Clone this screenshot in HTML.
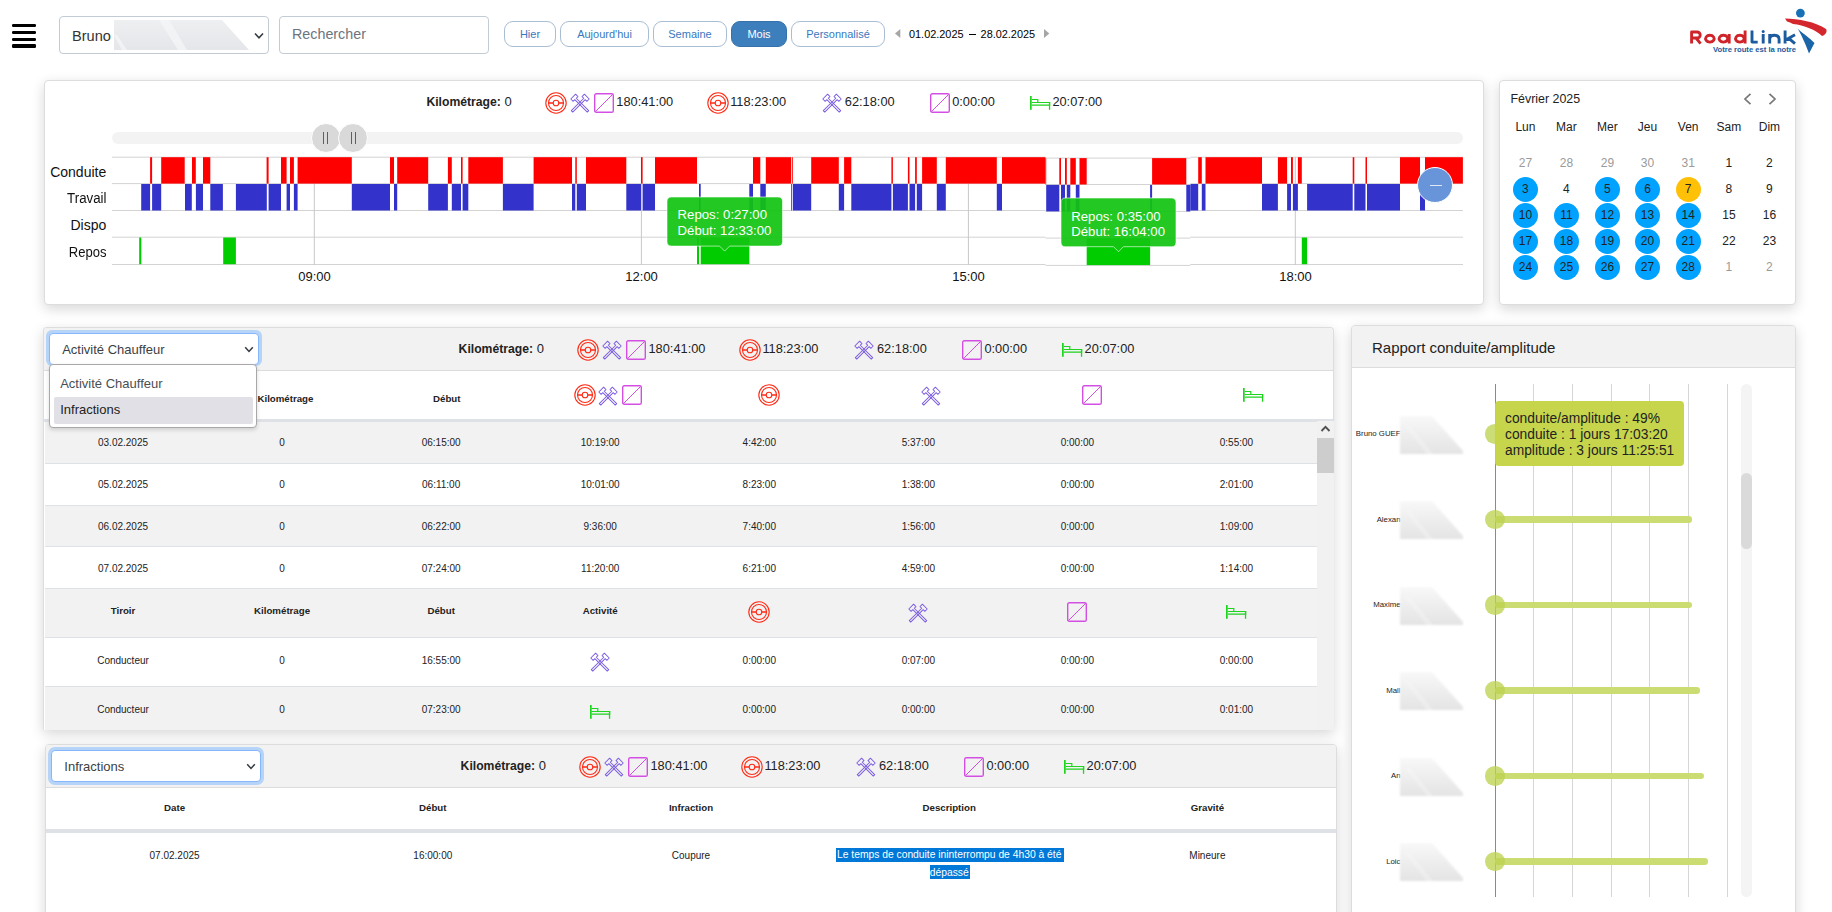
<!DOCTYPE html>
<html><head><meta charset="utf-8">
<style>
*{box-sizing:border-box;margin:0;padding:0}
html,body{width:1832px;height:912px;overflow:hidden;background:#fff;font-family:"Liberation Sans", sans-serif;color:#222}
.a{position:absolute}
.t{position:absolute;white-space:nowrap;line-height:1}
.ic{position:absolute;overflow:visible}
.card{position:absolute;background:#fff;border:1px solid #dddddd;border-radius:4px;box-shadow:0 4px 13px rgba(0,0,0,0.16)}
.btn{position:absolute;top:21px;height:26px;border:1px solid #a9bdd3;border-radius:9px;color:#3a78bd;font-size:11px;line-height:24px;text-align:center;background:#fff}
.cal{position:absolute;width:25px;height:25px;border-radius:50%;font-size:12px;line-height:25px;text-align:center;color:#222}
.td{position:absolute;font-size:10px;line-height:10px;text-align:center;width:160px;white-space:nowrap}
.th{position:absolute;font-size:9.7px;line-height:10px;text-align:center;width:160px;font-weight:bold;white-space:nowrap}
</style></head><body>

<div class="a" style="left:12px;top:24px;width:24px;height:3.4px;background:#000;border-radius:1.2px"></div>
<div class="a" style="left:12px;top:30.9px;width:24px;height:3.2px;background:#000;border-radius:1.2px"></div>
<div class="a" style="left:12px;top:37.6px;width:24px;height:3.3px;background:#000;border-radius:1.2px"></div>
<div class="a" style="left:12px;top:44.2px;width:24px;height:3.4px;background:#000;border-radius:1.2px"></div>
<div class="a" style="left:59px;top:16px;width:210px;height:38px;border:1px solid #c3cbd5;border-radius:4px;background:#fff"></div>
<div class="t" style="left:72px;top:29.1px;font-size:14.6px;color:#333">Bruno</div>
<svg class="ic" style="left:114px;top:20px;filter:blur(0.6px)" width="135" height="30" viewBox="0 0 135 30"><defs><linearGradient id="bg1" x1="0" y1="0" x2="0" y2="1"><stop offset="0" stop-color="#eeeff1"/><stop offset="1" stop-color="#e4e6e9"/></linearGradient></defs><polygon points="0,0 108,0 135,30 0,30" fill="url(#bg1)"/><polygon points="45,0 55,0 73,30 64,30" fill="#f4f5f6" opacity="0.8"/><polygon points="0,15 3,15 13,30 8,30" fill="#f4f5f6" opacity="0.8"/></svg>
<svg class="ic" style="left:254px;top:32px" width="10" height="8" viewBox="0 0 10 8"><path d="M1 1.5L5 5.8L9 1.5" fill="none" stroke="#343a40" stroke-width="1.6"/></svg>
<div class="a" style="left:279px;top:16px;width:210px;height:38px;border:1px solid #c3cbd5;border-radius:4px;background:#fff"></div>
<div class="t" style="left:292px;top:26.8px;font-size:14.3px;color:#6c757d">Rechercher</div>
<div class="btn" style="left:504px;width:52px">Hier</div>
<div class="btn" style="left:560px;width:89px">Aujourd'hui</div>
<div class="btn" style="left:653px;width:74px">Semaine</div>
<div class="btn" style="left:731px;width:56px;background:#3d7ebd;border-color:#3571ab;color:#fff">Mois</div>
<div class="btn" style="left:791px;width:94px">Personnalisé</div>
<svg class="ic" style="left:894.8px;top:28.8px" width="6" height="9" viewBox="0 0 6 9"><path d="M5.3 0V9L0 4.5Z" fill="#a6a6a6"/></svg>
<div class="t" style="left:909px;top:29px;font-size:10.9px;color:#000">01.02.2025</div>
<div class="a" style="left:968.8px;top:34px;width:7px;height:1.1px;background:#000"></div>
<div class="t" style="left:980.6px;top:29px;font-size:10.9px;color:#000">28.02.2025</div>
<svg class="ic" style="left:1044px;top:28.8px" width="6" height="9" viewBox="0 0 6 9"><path d="M0 0V9L5.3 4.5Z" fill="#a6a6a6"/></svg>
<svg class="ic" style="left:1680px;top:0px" width="152" height="60" viewBox="1680 0 152 60">
<path d="M1691.6 43.6V32H1697.2A3 3 0 0 1 1697.2 38H1691.6M1696 38L1700.6 43.6M1709.9 35.3A4.3 3.4 0 1 1 1709.85 35.3ZM1723.4 35.3A4.3 3.4 0 1 0 1723.45 35.3ZM1729.2 34V43.6M1739.8 35.3A4.3 3.4 0 1 0 1739.85 35.3ZM1745.1 30.5V43.6" fill="none" stroke="#d0242b" stroke-width="2.9" stroke-linecap="butt" stroke-linejoin="round"/>
<path d="M1752 30.5V42.1H1757.7M1763.2 34V43.6M1769.7 43.6V34M1769.7 38.6C1770 36 1772 35.2 1774.3 35.2C1777 35.2 1779.1 36.2 1779.1 39.2V43.6M1785.1 30.5V43.6M1785.1 40.2L1795 34.8M1788.8 38.3L1795 43.6" fill="none" stroke="#1b5b9e" stroke-width="2.9" stroke-linecap="butt" stroke-linejoin="round"/>
<circle cx="1763.2" cy="31.6" r="1.5" fill="#1b5b9e"/>
<text x="1713" y="52" font-family="Liberation Sans" font-weight="bold" font-size="7.4" fill="#1b5b9e" textLength="83" lengthAdjust="spacingAndGlyphs">Votre route est la notre</text>
<circle cx="1800.4" cy="13.1" r="4.4" fill="#1870b5"/>
<path d="M1785 18.5 C1798 18.5 1816 22 1826 29 C1827.5 31 1826 35 1822 36 C1816 30 1804 25 1793 24 L1790 22.5 L1787 21.5Z" fill="#d3262d"/>
<path d="M1797.5 28.5 C1802 33 1810 38 1814.5 43 L1809 53.5 C1806 45 1801 34 1797.5 28.5Z" fill="#1a64a8"/>
</svg>
<div class="card" style="left:44px;top:80px;width:1440px;height:225px"></div>
<div class="t" style="left:426.4px;top:95.2px;font-size:13px;line-height:13px"><b style="font-size:12.2px">Kilométrage:</b> 0</div>
<svg class="ic" style="left:544.8px;top:91.9px" width="22" height="22" viewBox="0 0 22 22"><g fill="none" stroke="#ff2a14" stroke-width="1.1"><circle cx="11" cy="11" r="10.2"/><circle cx="11" cy="11" r="7.5"/><circle cx="11" cy="11" r="2.8"/></g><path d="M3.5 11H8.2M13.8 11H18.5" stroke="#ff2a14" stroke-width="1.5"/></svg>
<svg class="ic" style="left:570.2px;top:93.4px" width="20" height="19" viewBox="0 0 20 19"><g fill="none" stroke="#7b5ce0" stroke-width="0.95" stroke-linejoin="round"><path transform="translate(10 10.4) rotate(-45)" d="M-1 11.3L-1 -6.3L-3.4 -6.3L-3.4 -9.6L3.4 -9.6L3.4 -6.3L1 -6.3L1 11.3Z"/><path transform="translate(10 10.4) rotate(45)" d="M-1 11.3L-1 -6.3L-3.4 -6.3L-3.4 -9.6L3.4 -9.6L3.4 -6.3L1 -6.3L1 11.3Z"/></g></svg>
<svg class="ic" style="left:594.1px;top:92.9px" width="20" height="20" viewBox="0 0 20 20"><rect x="0.7" y="0.7" width="18.6" height="18.6" rx="1.6" fill="none" stroke="#d34fe3" stroke-width="1.4"/><path d="M1.3 18.7L18.7 1.3" stroke="#d34fe3" stroke-width="1"/></svg>
<div class="t" style="left:616.3px;top:95.2px;font-size:12.8px;line-height:13px">180:41:00</div>
<svg class="ic" style="left:706.9px;top:91.9px" width="22" height="22" viewBox="0 0 22 22"><g fill="none" stroke="#ff2a14" stroke-width="1.1"><circle cx="11" cy="11" r="10.2"/><circle cx="11" cy="11" r="7.5"/><circle cx="11" cy="11" r="2.8"/></g><path d="M3.5 11H8.2M13.8 11H18.5" stroke="#ff2a14" stroke-width="1.5"/></svg>
<div class="t" style="left:730.2px;top:95.2px;font-size:12.8px;line-height:13px">118:23:00</div>
<svg class="ic" style="left:821.8px;top:93.4px" width="20" height="19" viewBox="0 0 20 19"><g fill="none" stroke="#7b5ce0" stroke-width="0.95" stroke-linejoin="round"><path transform="translate(10 10.4) rotate(-45)" d="M-1 11.3L-1 -6.3L-3.4 -6.3L-3.4 -9.6L3.4 -9.6L3.4 -6.3L1 -6.3L1 11.3Z"/><path transform="translate(10 10.4) rotate(45)" d="M-1 11.3L-1 -6.3L-3.4 -6.3L-3.4 -9.6L3.4 -9.6L3.4 -6.3L1 -6.3L1 11.3Z"/></g></svg>
<div class="t" style="left:844.8px;top:95.2px;font-size:12.8px;line-height:13px">62:18:00</div>
<svg class="ic" style="left:929.9px;top:92.9px" width="20" height="20" viewBox="0 0 20 20"><rect x="0.7" y="0.7" width="18.6" height="18.6" rx="1.6" fill="none" stroke="#d34fe3" stroke-width="1.4"/><path d="M1.3 18.7L18.7 1.3" stroke="#d34fe3" stroke-width="1"/></svg>
<div class="t" style="left:952.2px;top:95.2px;font-size:12.8px;line-height:13px">0:00:00</div>
<svg class="ic" style="left:1029.8px;top:96.0px" width="21" height="14" viewBox="0 0 21 14"><rect x="0" y="0" width="1.7" height="13.8" fill="#1ed41e"/><path d="M1.7 3.5H7.8V6.5M1.7 6.5H19.6V9.2H1.7" fill="none" stroke="#1ed41e" stroke-width="1.2"/><rect x="18.9" y="6" width="1.3" height="7.8" fill="#1ed41e"/></svg>
<div class="t" style="left:1052.4px;top:95.2px;font-size:12.8px;line-height:13px">20:07:00</div>
<div class="a" style="left:112px;top:132px;width:1351px;height:12px;border-radius:6px;background:#f3f3f3"></div>
<div class="a" style="left:310.75px;top:123.19999999999999px;width:30px;height:30px;border-radius:50%;background:#d9d9d9;border:1px solid #fff"></div>
<div class="a" style="left:322.8px;top:132px;width:1.3px;height:12px;background:#5f5f5f"></div>
<div class="a" style="left:327.1px;top:132px;width:1.3px;height:12px;background:#5f5f5f"></div>
<div class="a" style="left:338.3px;top:123.19999999999999px;width:30px;height:30px;border-radius:50%;background:#d9d9d9;border:1px solid #fff"></div>
<div class="a" style="left:350.9px;top:132px;width:1.3px;height:12px;background:#5f5f5f"></div>
<div class="a" style="left:355.2px;top:132px;width:1.3px;height:12px;background:#5f5f5f"></div>
<div class="t" style="right:1725.8px;top:165.0px;font-size:14px;color:#111;transform:scaleX(1.0);transform-origin:100% 50%">Conduite</div>
<div class="t" style="right:1725.8px;top:190.8px;font-size:14px;color:#111;transform:scaleX(0.95);transform-origin:100% 50%">Travail</div>
<div class="t" style="right:1725.8px;top:217.5px;font-size:14px;color:#111;transform:scaleX(1.0);transform-origin:100% 50%">Dispo</div>
<div class="t" style="right:1725.8px;top:244.8px;font-size:14px;color:#111;transform:scaleX(0.93);transform-origin:100% 50%">Repos</div>
<svg class="ic" style="left:112px;top:157px" width="1351" height="110" viewBox="0 0 1351 110"><defs><clipPath id="cA"><rect x="0" y="-2" width="933.5" height="115"/><rect x="1078.3" y="-2" width="400" height="115"/></clipPath><clipPath id="cB"><rect x="933.5" y="-2" width="144.79999999999995" height="115"/></clipPath></defs><g clip-path="url(#cA)"><rect x="0" y="-0.3" width="1351" height="1" fill="#d3d3d3"/><rect x="0" y="26.1" width="1351" height="1" fill="#d3d3d3"/><rect x="0" y="53.0" width="1351" height="1" fill="#d3d3d3"/><rect x="0" y="79.7" width="1351" height="1" fill="#d3d3d3"/><rect x="0" y="107.0" width="1351" height="1" fill="#d3d3d3"/><rect x="201.8" y="0" width="1" height="108" fill="#c8c8c8"/><rect x="528.9" y="0" width="1" height="108" fill="#c8c8c8"/><rect x="855.9" y="0" width="1" height="108" fill="#c8c8c8"/><rect x="1182.8" y="0" width="1" height="108" fill="#c8c8c8"/><rect x="27.2" y="80.5" width="2.1" height="26.7" fill="#00cc00"/>
<rect x="29.2" y="27.0" width="8.9" height="26.5" fill="#3333cc"/>
<rect x="38.1" y="0.2" width="2.0" height="26.4" fill="#ff0000"/>
<rect x="40.1" y="27.0" width="9.1" height="26.5" fill="#3333cc"/>
<rect x="49.2" y="0.2" width="23.5" height="26.4" fill="#ff0000"/>
<rect x="73.0" y="27.0" width="6.8" height="26.5" fill="#3333cc"/>
<rect x="80.0" y="0.2" width="3.8" height="26.4" fill="#ff0000"/>
<rect x="83.9" y="27.0" width="7.1" height="26.5" fill="#3333cc"/>
<rect x="91.0" y="0.2" width="7.3" height="26.4" fill="#ff0000"/>
<rect x="98.3" y="27.0" width="12.6" height="26.5" fill="#3333cc"/>
<rect x="111.2" y="80.5" width="12.7" height="26.7" fill="#00cc00"/>
<rect x="123.9" y="27.0" width="30.9" height="26.5" fill="#3333cc"/>
<rect x="154.6" y="0.2" width="2.0" height="26.4" fill="#ff0000"/>
<rect x="156.6" y="27.0" width="12.4" height="26.5" fill="#3333cc"/>
<rect x="169.0" y="0.2" width="5.6" height="26.4" fill="#ff0000"/>
<rect x="174.6" y="27.0" width="3.4" height="26.5" fill="#3333cc"/>
<rect x="178.0" y="0.2" width="3.9" height="26.4" fill="#ff0000"/>
<rect x="181.9" y="27.0" width="3.7" height="26.5" fill="#3333cc"/>
<rect x="185.6" y="0.2" width="54.2" height="26.4" fill="#ff0000"/>
<rect x="239.8" y="27.0" width="38.2" height="26.5" fill="#3333cc"/>
<rect x="278.0" y="0.2" width="4.0" height="26.4" fill="#ff0000"/>
<rect x="282.0" y="27.0" width="3.2" height="26.5" fill="#3333cc"/>
<rect x="285.2" y="0.2" width="31.0" height="26.4" fill="#ff0000"/>
<rect x="316.2" y="27.0" width="19.7" height="26.5" fill="#3333cc"/>
<rect x="335.9" y="0.2" width="3.9" height="26.4" fill="#ff0000"/>
<rect x="339.8" y="27.0" width="9.2" height="26.5" fill="#3333cc"/>
<rect x="349.0" y="0.2" width="1.6" height="26.4" fill="#ff0000"/>
<rect x="350.6" y="27.0" width="5.7" height="26.5" fill="#3333cc"/>
<rect x="356.3" y="0.2" width="34.6" height="26.4" fill="#ff0000"/>
<rect x="390.9" y="27.0" width="30.7" height="26.5" fill="#3333cc"/>
<rect x="421.6" y="0.2" width="38.4" height="26.4" fill="#ff0000"/>
<rect x="460.0" y="27.0" width="3.3" height="26.5" fill="#3333cc"/>
<rect x="463.3" y="0.2" width="1.5" height="26.4" fill="#ff0000"/>
<rect x="464.8" y="27.0" width="9.2" height="26.5" fill="#3333cc"/>
<rect x="474.0" y="0.2" width="40.3" height="26.4" fill="#ff0000"/>
<rect x="514.3" y="27.0" width="14.7" height="26.5" fill="#3333cc"/>
<rect x="529.0" y="0.2" width="1.6" height="26.4" fill="#ff0000"/>
<rect x="530.6" y="27.0" width="12.4" height="26.5" fill="#3333cc"/>
<rect x="543.0" y="0.2" width="42.0" height="26.4" fill="#ff0000"/>
<rect x="585.0" y="80.5" width="2.0" height="26.7" fill="#00cc00"/>
<rect x="587.0" y="27.0" width="1.7" height="26.5" fill="#3333cc"/>
<rect x="588.7" y="80.5" width="48.6" height="26.7" fill="#00cc00"/>
<rect x="637.3" y="27.0" width="3.7" height="26.5" fill="#3333cc"/>
<rect x="641.0" y="0.2" width="7.3" height="26.4" fill="#ff0000"/>
<rect x="648.3" y="27.0" width="5.5" height="26.5" fill="#3333cc"/>
<rect x="653.8" y="0.2" width="25.4" height="26.4" fill="#ff0000"/>
<rect x="679.2" y="27.0" width="1.0" height="26.5" fill="#3333cc"/>
<rect x="680.2" y="0.2" width="0.8" height="26.4" fill="#ff0000"/>
<rect x="681.0" y="27.0" width="18.2" height="26.5" fill="#3333cc"/>
<rect x="699.2" y="0.2" width="27.6" height="26.4" fill="#ff0000"/>
<rect x="726.8" y="27.0" width="5.3" height="26.5" fill="#3333cc"/>
<rect x="732.1" y="0.2" width="7.2" height="26.4" fill="#ff0000"/>
<rect x="739.3" y="27.0" width="40.1" height="26.5" fill="#3333cc"/>
<rect x="779.4" y="0.2" width="1.5" height="26.4" fill="#ff0000"/>
<rect x="780.9" y="27.0" width="15.0" height="26.5" fill="#3333cc"/>
<rect x="795.9" y="0.2" width="1.6" height="26.4" fill="#ff0000"/>
<rect x="797.5" y="27.0" width="5.6" height="26.5" fill="#3333cc"/>
<rect x="803.1" y="0.2" width="1.7" height="26.4" fill="#ff0000"/>
<rect x="804.8" y="27.0" width="5.3" height="26.5" fill="#3333cc"/>
<rect x="810.1" y="0.2" width="14.7" height="26.4" fill="#ff0000"/>
<rect x="824.8" y="27.0" width="9.0" height="26.5" fill="#3333cc"/>
<rect x="833.8" y="0.2" width="51.0" height="26.4" fill="#ff0000"/>
<rect x="884.8" y="27.0" width="5.2" height="26.5" fill="#3333cc"/>
<rect x="890.0" y="0.2" width="44.2" height="26.4" fill="#ff0000"/>
<rect x="934.2" y="27.0" width="13.1" height="26.5" fill="#3333cc"/>
<rect x="947.3" y="0.2" width="1.7" height="26.4" fill="#ff0000"/>
<rect x="949.0" y="27.0" width="4.0" height="26.5" fill="#3333cc"/>
<rect x="953.0" y="0.2" width="1.8" height="26.4" fill="#ff0000"/>
<rect x="954.8" y="27.0" width="3.5" height="26.5" fill="#3333cc"/>
<rect x="958.3" y="0.2" width="5.5" height="26.4" fill="#ff0000"/>
<rect x="963.8" y="27.0" width="3.7" height="26.5" fill="#3333cc"/>
<rect x="967.5" y="0.2" width="7.2" height="26.4" fill="#ff0000"/>
<rect x="974.7" y="80.5" width="63.4" height="26.7" fill="#00cc00"/>
<rect x="1038.1" y="27.0" width="2.0" height="26.5" fill="#3333cc"/>
<rect x="1040.1" y="0.2" width="34.2" height="26.4" fill="#ff0000"/>
<rect x="1074.3" y="27.0" width="11.9" height="26.5" fill="#3333cc"/>
<rect x="1086.2" y="0.2" width="3.6" height="26.4" fill="#ff0000"/>
<rect x="1089.8" y="27.0" width="3.7" height="26.5" fill="#3333cc"/>
<rect x="1093.5" y="0.2" width="56.5" height="26.4" fill="#ff0000"/>
<rect x="1150.0" y="27.0" width="15.9" height="26.5" fill="#3333cc"/>
<rect x="1165.9" y="0.2" width="9.2" height="26.4" fill="#ff0000"/>
<rect x="1175.1" y="27.0" width="3.9" height="26.5" fill="#3333cc"/>
<rect x="1179.0" y="0.2" width="1.9" height="26.4" fill="#ff0000"/>
<rect x="1180.9" y="27.0" width="5.0" height="26.5" fill="#3333cc"/>
<rect x="1185.9" y="0.2" width="3.9" height="26.4" fill="#ff0000"/>
<rect x="1189.8" y="80.5" width="5.3" height="26.7" fill="#00cc00"/>
<rect x="1195.1" y="27.0" width="45.6" height="26.5" fill="#3333cc"/>
<rect x="1240.7" y="0.2" width="1.6" height="26.4" fill="#ff0000"/>
<rect x="1242.3" y="27.0" width="11.2" height="26.5" fill="#3333cc"/>
<rect x="1253.5" y="0.2" width="1.5" height="26.4" fill="#ff0000"/>
<rect x="1255.0" y="27.0" width="33.0" height="26.5" fill="#3333cc"/>
<rect x="1288.0" y="0.2" width="20.0" height="26.4" fill="#ff0000"/>
<rect x="1308.0" y="27.0" width="5.0" height="26.5" fill="#3333cc"/>
<rect x="1313.0" y="0.2" width="37.9" height="26.4" fill="#ff0000"/>
</g><g clip-path="url(#cB)"><g transform="translate(0 0.9)"><rect x="0" y="-0.3" width="1351" height="1" fill="#d3d3d3"/><rect x="0" y="26.1" width="1351" height="1" fill="#d3d3d3"/><rect x="0" y="53.0" width="1351" height="1" fill="#d3d3d3"/><rect x="0" y="79.7" width="1351" height="1" fill="#d3d3d3"/><rect x="0" y="107.0" width="1351" height="1" fill="#d3d3d3"/><rect x="201.8" y="0" width="1" height="108" fill="#c8c8c8"/><rect x="528.9" y="0" width="1" height="108" fill="#c8c8c8"/><rect x="855.9" y="0" width="1" height="108" fill="#c8c8c8"/><rect x="1182.8" y="0" width="1" height="108" fill="#c8c8c8"/><rect x="27.2" y="80.5" width="2.1" height="26.7" fill="#00cc00"/>
<rect x="29.2" y="27.0" width="8.9" height="26.5" fill="#3333cc"/>
<rect x="38.1" y="0.2" width="2.0" height="26.4" fill="#ff0000"/>
<rect x="40.1" y="27.0" width="9.1" height="26.5" fill="#3333cc"/>
<rect x="49.2" y="0.2" width="23.5" height="26.4" fill="#ff0000"/>
<rect x="73.0" y="27.0" width="6.8" height="26.5" fill="#3333cc"/>
<rect x="80.0" y="0.2" width="3.8" height="26.4" fill="#ff0000"/>
<rect x="83.9" y="27.0" width="7.1" height="26.5" fill="#3333cc"/>
<rect x="91.0" y="0.2" width="7.3" height="26.4" fill="#ff0000"/>
<rect x="98.3" y="27.0" width="12.6" height="26.5" fill="#3333cc"/>
<rect x="111.2" y="80.5" width="12.7" height="26.7" fill="#00cc00"/>
<rect x="123.9" y="27.0" width="30.9" height="26.5" fill="#3333cc"/>
<rect x="154.6" y="0.2" width="2.0" height="26.4" fill="#ff0000"/>
<rect x="156.6" y="27.0" width="12.4" height="26.5" fill="#3333cc"/>
<rect x="169.0" y="0.2" width="5.6" height="26.4" fill="#ff0000"/>
<rect x="174.6" y="27.0" width="3.4" height="26.5" fill="#3333cc"/>
<rect x="178.0" y="0.2" width="3.9" height="26.4" fill="#ff0000"/>
<rect x="181.9" y="27.0" width="3.7" height="26.5" fill="#3333cc"/>
<rect x="185.6" y="0.2" width="54.2" height="26.4" fill="#ff0000"/>
<rect x="239.8" y="27.0" width="38.2" height="26.5" fill="#3333cc"/>
<rect x="278.0" y="0.2" width="4.0" height="26.4" fill="#ff0000"/>
<rect x="282.0" y="27.0" width="3.2" height="26.5" fill="#3333cc"/>
<rect x="285.2" y="0.2" width="31.0" height="26.4" fill="#ff0000"/>
<rect x="316.2" y="27.0" width="19.7" height="26.5" fill="#3333cc"/>
<rect x="335.9" y="0.2" width="3.9" height="26.4" fill="#ff0000"/>
<rect x="339.8" y="27.0" width="9.2" height="26.5" fill="#3333cc"/>
<rect x="349.0" y="0.2" width="1.6" height="26.4" fill="#ff0000"/>
<rect x="350.6" y="27.0" width="5.7" height="26.5" fill="#3333cc"/>
<rect x="356.3" y="0.2" width="34.6" height="26.4" fill="#ff0000"/>
<rect x="390.9" y="27.0" width="30.7" height="26.5" fill="#3333cc"/>
<rect x="421.6" y="0.2" width="38.4" height="26.4" fill="#ff0000"/>
<rect x="460.0" y="27.0" width="3.3" height="26.5" fill="#3333cc"/>
<rect x="463.3" y="0.2" width="1.5" height="26.4" fill="#ff0000"/>
<rect x="464.8" y="27.0" width="9.2" height="26.5" fill="#3333cc"/>
<rect x="474.0" y="0.2" width="40.3" height="26.4" fill="#ff0000"/>
<rect x="514.3" y="27.0" width="14.7" height="26.5" fill="#3333cc"/>
<rect x="529.0" y="0.2" width="1.6" height="26.4" fill="#ff0000"/>
<rect x="530.6" y="27.0" width="12.4" height="26.5" fill="#3333cc"/>
<rect x="543.0" y="0.2" width="42.0" height="26.4" fill="#ff0000"/>
<rect x="585.0" y="80.5" width="2.0" height="26.7" fill="#00cc00"/>
<rect x="587.0" y="27.0" width="1.7" height="26.5" fill="#3333cc"/>
<rect x="588.7" y="80.5" width="48.6" height="26.7" fill="#00cc00"/>
<rect x="637.3" y="27.0" width="3.7" height="26.5" fill="#3333cc"/>
<rect x="641.0" y="0.2" width="7.3" height="26.4" fill="#ff0000"/>
<rect x="648.3" y="27.0" width="5.5" height="26.5" fill="#3333cc"/>
<rect x="653.8" y="0.2" width="25.4" height="26.4" fill="#ff0000"/>
<rect x="679.2" y="27.0" width="1.0" height="26.5" fill="#3333cc"/>
<rect x="680.2" y="0.2" width="0.8" height="26.4" fill="#ff0000"/>
<rect x="681.0" y="27.0" width="18.2" height="26.5" fill="#3333cc"/>
<rect x="699.2" y="0.2" width="27.6" height="26.4" fill="#ff0000"/>
<rect x="726.8" y="27.0" width="5.3" height="26.5" fill="#3333cc"/>
<rect x="732.1" y="0.2" width="7.2" height="26.4" fill="#ff0000"/>
<rect x="739.3" y="27.0" width="40.1" height="26.5" fill="#3333cc"/>
<rect x="779.4" y="0.2" width="1.5" height="26.4" fill="#ff0000"/>
<rect x="780.9" y="27.0" width="15.0" height="26.5" fill="#3333cc"/>
<rect x="795.9" y="0.2" width="1.6" height="26.4" fill="#ff0000"/>
<rect x="797.5" y="27.0" width="5.6" height="26.5" fill="#3333cc"/>
<rect x="803.1" y="0.2" width="1.7" height="26.4" fill="#ff0000"/>
<rect x="804.8" y="27.0" width="5.3" height="26.5" fill="#3333cc"/>
<rect x="810.1" y="0.2" width="14.7" height="26.4" fill="#ff0000"/>
<rect x="824.8" y="27.0" width="9.0" height="26.5" fill="#3333cc"/>
<rect x="833.8" y="0.2" width="51.0" height="26.4" fill="#ff0000"/>
<rect x="884.8" y="27.0" width="5.2" height="26.5" fill="#3333cc"/>
<rect x="890.0" y="0.2" width="44.2" height="26.4" fill="#ff0000"/>
<rect x="934.2" y="27.0" width="13.1" height="26.5" fill="#3333cc"/>
<rect x="947.3" y="0.2" width="1.7" height="26.4" fill="#ff0000"/>
<rect x="949.0" y="27.0" width="4.0" height="26.5" fill="#3333cc"/>
<rect x="953.0" y="0.2" width="1.8" height="26.4" fill="#ff0000"/>
<rect x="954.8" y="27.0" width="3.5" height="26.5" fill="#3333cc"/>
<rect x="958.3" y="0.2" width="5.5" height="26.4" fill="#ff0000"/>
<rect x="963.8" y="27.0" width="3.7" height="26.5" fill="#3333cc"/>
<rect x="967.5" y="0.2" width="7.2" height="26.4" fill="#ff0000"/>
<rect x="974.7" y="80.5" width="63.4" height="26.7" fill="#00cc00"/>
<rect x="1038.1" y="27.0" width="2.0" height="26.5" fill="#3333cc"/>
<rect x="1040.1" y="0.2" width="34.2" height="26.4" fill="#ff0000"/>
<rect x="1074.3" y="27.0" width="11.9" height="26.5" fill="#3333cc"/>
<rect x="1086.2" y="0.2" width="3.6" height="26.4" fill="#ff0000"/>
<rect x="1089.8" y="27.0" width="3.7" height="26.5" fill="#3333cc"/>
<rect x="1093.5" y="0.2" width="56.5" height="26.4" fill="#ff0000"/>
<rect x="1150.0" y="27.0" width="15.9" height="26.5" fill="#3333cc"/>
<rect x="1165.9" y="0.2" width="9.2" height="26.4" fill="#ff0000"/>
<rect x="1175.1" y="27.0" width="3.9" height="26.5" fill="#3333cc"/>
<rect x="1179.0" y="0.2" width="1.9" height="26.4" fill="#ff0000"/>
<rect x="1180.9" y="27.0" width="5.0" height="26.5" fill="#3333cc"/>
<rect x="1185.9" y="0.2" width="3.9" height="26.4" fill="#ff0000"/>
<rect x="1189.8" y="80.5" width="5.3" height="26.7" fill="#00cc00"/>
<rect x="1195.1" y="27.0" width="45.6" height="26.5" fill="#3333cc"/>
<rect x="1240.7" y="0.2" width="1.6" height="26.4" fill="#ff0000"/>
<rect x="1242.3" y="27.0" width="11.2" height="26.5" fill="#3333cc"/>
<rect x="1253.5" y="0.2" width="1.5" height="26.4" fill="#ff0000"/>
<rect x="1255.0" y="27.0" width="33.0" height="26.5" fill="#3333cc"/>
<rect x="1288.0" y="0.2" width="20.0" height="26.4" fill="#ff0000"/>
<rect x="1308.0" y="27.0" width="5.0" height="26.5" fill="#3333cc"/>
<rect x="1313.0" y="0.2" width="37.9" height="26.4" fill="#ff0000"/>
</g></g></svg>
<div class="t" style="left:274.5px;width:80px;text-align:center;top:269.8px;font-size:13px;color:#111">09:00</div>
<div class="t" style="left:601.6px;width:80px;text-align:center;top:269.8px;font-size:13px;color:#111">12:00</div>
<div class="t" style="left:928.5px;width:80px;text-align:center;top:269.8px;font-size:13px;color:#111">15:00</div>
<div class="t" style="left:1255.5px;width:80px;text-align:center;top:269.8px;font-size:13px;color:#111">18:00</div>
<svg class="ic" style="left:666.4px;top:195.7px" width="117.5" height="57.10000000000002" viewBox="-1 -1 117.5 57.10000000000002"><path d="M4.5 0H111.0Q115.5 0 115.5 4.5V44.60000000000002Q115.5 49.10000000000002 111.0 49.10000000000002H62.60000000000002L57.60000000000002 54.10000000000002L52.60000000000002 49.10000000000002H4.5Q0 49.10000000000002 0 44.60000000000002V4.5Q0 0 4.5 0Z" fill="rgba(18,196,18,0.93)" stroke="rgba(255,255,255,0.75)" stroke-width="0.8"/></svg>
<div class="t" style="left:677.6px;top:207.2px;font-size:13.2px;line-height:15.6px;color:#fff">Repos: 0:27:00<br>Début: 12:33:00</div>
<svg class="ic" style="left:1060px;top:197px" width="117" height="56.69999999999999" viewBox="-1 -1 117 56.69999999999999"><path d="M4.5 0H110.5Q115 0 115 4.5V44.19999999999999Q115 48.69999999999999 110.5 48.69999999999999H62.5L57.5 53.69999999999999L52.5 48.69999999999999H4.5Q0 48.69999999999999 0 44.19999999999999V4.5Q0 0 4.5 0Z" fill="rgba(18,196,18,0.93)" stroke="rgba(255,255,255,0.75)" stroke-width="0.8"/></svg>
<div class="t" style="left:1071.2px;top:208.5px;font-size:13.2px;line-height:15.6px;color:#fff">Repos: 0:35:00<br>Début: 16:04:00</div>
<div class="a" style="left:1417px;top:166.5px;width:36px;height:36px;border-radius:50%;background:#6895d9;border:1px solid #fff"></div>
<div class="a" style="left:1429.5px;top:184.8px;width:12px;height:1.2px;background:#dfe8f6"></div>
<div class="card" style="left:1499px;top:80px;width:297px;height:225px"></div>
<div class="t" style="left:1510.5px;top:92.5px;font-size:12.4px;color:#222">Février 2025</div>
<svg class="ic" style="left:1743px;top:93px" width="9" height="12" viewBox="0 0 9 12"><path d="M7.5 0.8L2 6L7.5 11.2" fill="none" stroke="#777" stroke-width="1.7"/></svg>
<svg class="ic" style="left:1768px;top:93px" width="9" height="12" viewBox="0 0 9 12"><path d="M1.5 0.8L7 6L1.5 11.2" fill="none" stroke="#777" stroke-width="1.7"/></svg>
<div class="t" style="left:1500.4px;width:50px;text-align:center;top:121px;font-size:12px;color:#222">Lun</div>
<div class="t" style="left:1541.4px;width:50px;text-align:center;top:121px;font-size:12px;color:#222">Mar</div>
<div class="t" style="left:1582.4px;width:50px;text-align:center;top:121px;font-size:12px;color:#222">Mer</div>
<div class="t" style="left:1622.5px;width:50px;text-align:center;top:121px;font-size:12px;color:#222">Jeu</div>
<div class="t" style="left:1663.2px;width:50px;text-align:center;top:121px;font-size:12px;color:#222">Ven</div>
<div class="t" style="left:1703.9px;width:50px;text-align:center;top:121px;font-size:12px;color:#222">Sam</div>
<div class="t" style="left:1744.4px;width:50px;text-align:center;top:121px;font-size:12px;color:#222">Dim</div>
<div class="cal" style="left:1512.9px;top:150.9px;color:#9a9a9a;">27</div>
<div class="cal" style="left:1553.9px;top:150.9px;color:#9a9a9a;">28</div>
<div class="cal" style="left:1594.9px;top:150.9px;color:#9a9a9a;">29</div>
<div class="cal" style="left:1635.0px;top:150.9px;color:#9a9a9a;">30</div>
<div class="cal" style="left:1675.7px;top:150.9px;color:#9a9a9a;">31</div>
<div class="cal" style="left:1716.4px;top:150.9px;">1</div>
<div class="cal" style="left:1756.9px;top:150.9px;">2</div>
<div class="cal" style="left:1512.9px;top:176.9px;background:#00a2ff;">3</div>
<div class="cal" style="left:1553.9px;top:176.9px;">4</div>
<div class="cal" style="left:1594.9px;top:176.9px;background:#00a2ff;">5</div>
<div class="cal" style="left:1635.0px;top:176.9px;background:#00a2ff;">6</div>
<div class="cal" style="left:1675.7px;top:176.9px;background:#ffc107;">7</div>
<div class="cal" style="left:1716.4px;top:176.9px;">8</div>
<div class="cal" style="left:1756.9px;top:176.9px;">9</div>
<div class="cal" style="left:1512.9px;top:202.9px;background:#00a2ff;">10</div>
<div class="cal" style="left:1553.9px;top:202.9px;background:#00a2ff;">11</div>
<div class="cal" style="left:1594.9px;top:202.9px;background:#00a2ff;">12</div>
<div class="cal" style="left:1635.0px;top:202.9px;background:#00a2ff;">13</div>
<div class="cal" style="left:1675.7px;top:202.9px;background:#00a2ff;">14</div>
<div class="cal" style="left:1716.4px;top:202.9px;">15</div>
<div class="cal" style="left:1756.9px;top:202.9px;">16</div>
<div class="cal" style="left:1512.9px;top:228.9px;background:#00a2ff;">17</div>
<div class="cal" style="left:1553.9px;top:228.9px;background:#00a2ff;">18</div>
<div class="cal" style="left:1594.9px;top:228.9px;background:#00a2ff;">19</div>
<div class="cal" style="left:1635.0px;top:228.9px;background:#00a2ff;">20</div>
<div class="cal" style="left:1675.7px;top:228.9px;background:#00a2ff;">21</div>
<div class="cal" style="left:1716.4px;top:228.9px;">22</div>
<div class="cal" style="left:1756.9px;top:228.9px;">23</div>
<div class="cal" style="left:1512.9px;top:254.89999999999998px;background:#00a2ff;">24</div>
<div class="cal" style="left:1553.9px;top:254.89999999999998px;background:#00a2ff;">25</div>
<div class="cal" style="left:1594.9px;top:254.89999999999998px;background:#00a2ff;">26</div>
<div class="cal" style="left:1635.0px;top:254.89999999999998px;background:#00a2ff;">27</div>
<div class="cal" style="left:1675.7px;top:254.89999999999998px;background:#00a2ff;">28</div>
<div class="cal" style="left:1716.4px;top:254.89999999999998px;color:#9a9a9a;">1</div>
<div class="cal" style="left:1756.9px;top:254.89999999999998px;color:#9a9a9a;">2</div>
<div class="card" style="left:43px;top:327px;width:1291px;height:403px;overflow:hidden;border-bottom:none;border-radius:4px 4px 0 0"><div class="a" style="left:0;top:0;width:1292px;height:43px;background:#f2f2f2;border-bottom:1px solid #dcdcdc"></div><div class="a" style="left:0;top:91.2px;width:1292px;height:3px;background:#dee2e6"></div></div>
<div class="t" style="left:458.59999999999997px;top:342.0px;font-size:13px;line-height:13px"><b style="font-size:12.2px">Kilométrage:</b> 0</div>
<svg class="ic" style="left:577.0px;top:338.7px" width="22" height="22" viewBox="0 0 22 22"><g fill="none" stroke="#ff2a14" stroke-width="1.1"><circle cx="11" cy="11" r="10.2"/><circle cx="11" cy="11" r="7.5"/><circle cx="11" cy="11" r="2.8"/></g><path d="M3.5 11H8.2M13.8 11H18.5" stroke="#ff2a14" stroke-width="1.5"/></svg>
<svg class="ic" style="left:602.4000000000001px;top:340.2px" width="20" height="19" viewBox="0 0 20 19"><g fill="none" stroke="#7b5ce0" stroke-width="0.95" stroke-linejoin="round"><path transform="translate(10 10.4) rotate(-45)" d="M-1 11.3L-1 -6.3L-3.4 -6.3L-3.4 -9.6L3.4 -9.6L3.4 -6.3L1 -6.3L1 11.3Z"/><path transform="translate(10 10.4) rotate(45)" d="M-1 11.3L-1 -6.3L-3.4 -6.3L-3.4 -9.6L3.4 -9.6L3.4 -6.3L1 -6.3L1 11.3Z"/></g></svg>
<svg class="ic" style="left:626.3000000000001px;top:339.7px" width="20" height="20" viewBox="0 0 20 20"><rect x="0.7" y="0.7" width="18.6" height="18.6" rx="1.6" fill="none" stroke="#d34fe3" stroke-width="1.4"/><path d="M1.3 18.7L18.7 1.3" stroke="#d34fe3" stroke-width="1"/></svg>
<div class="t" style="left:648.5px;top:342.0px;font-size:12.8px;line-height:13px">180:41:00</div>
<svg class="ic" style="left:739.1px;top:338.7px" width="22" height="22" viewBox="0 0 22 22"><g fill="none" stroke="#ff2a14" stroke-width="1.1"><circle cx="11" cy="11" r="10.2"/><circle cx="11" cy="11" r="7.5"/><circle cx="11" cy="11" r="2.8"/></g><path d="M3.5 11H8.2M13.8 11H18.5" stroke="#ff2a14" stroke-width="1.5"/></svg>
<div class="t" style="left:762.4000000000001px;top:342.0px;font-size:12.8px;line-height:13px">118:23:00</div>
<svg class="ic" style="left:854.0px;top:340.2px" width="20" height="19" viewBox="0 0 20 19"><g fill="none" stroke="#7b5ce0" stroke-width="0.95" stroke-linejoin="round"><path transform="translate(10 10.4) rotate(-45)" d="M-1 11.3L-1 -6.3L-3.4 -6.3L-3.4 -9.6L3.4 -9.6L3.4 -6.3L1 -6.3L1 11.3Z"/><path transform="translate(10 10.4) rotate(45)" d="M-1 11.3L-1 -6.3L-3.4 -6.3L-3.4 -9.6L3.4 -9.6L3.4 -6.3L1 -6.3L1 11.3Z"/></g></svg>
<div class="t" style="left:877.0px;top:342.0px;font-size:12.8px;line-height:13px">62:18:00</div>
<svg class="ic" style="left:962.1px;top:339.7px" width="20" height="20" viewBox="0 0 20 20"><rect x="0.7" y="0.7" width="18.6" height="18.6" rx="1.6" fill="none" stroke="#d34fe3" stroke-width="1.4"/><path d="M1.3 18.7L18.7 1.3" stroke="#d34fe3" stroke-width="1"/></svg>
<div class="t" style="left:984.4000000000001px;top:342.0px;font-size:12.8px;line-height:13px">0:00:00</div>
<svg class="ic" style="left:1062.0px;top:342.8px" width="21" height="14" viewBox="0 0 21 14"><rect x="0" y="0" width="1.7" height="13.8" fill="#1ed41e"/><path d="M1.7 3.5H7.8V6.5M1.7 6.5H19.6V9.2H1.7" fill="none" stroke="#1ed41e" stroke-width="1.2"/><rect x="18.9" y="6" width="1.3" height="7.8" fill="#1ed41e"/></svg>
<div class="t" style="left:1084.6000000000001px;top:342.0px;font-size:12.8px;line-height:13px">20:07:00</div>
<div class="th" style="left:44.150000000000006px;top:394px">Date</div>
<div class="th" style="left:205.45000000000005px;top:394px">Kilométrage</div>
<div class="th" style="left:366.75px;top:394px">Début</div>
<svg class="ic" style="left:573.5px;top:384px" width="22" height="22" viewBox="0 0 22 22"><g fill="none" stroke="#ff2a14" stroke-width="1.1"><circle cx="11" cy="11" r="10.2"/><circle cx="11" cy="11" r="7.5"/><circle cx="11" cy="11" r="2.8"/></g><path d="M3.5 11H8.2M13.8 11H18.5" stroke="#ff2a14" stroke-width="1.5"/></svg>
<svg class="ic" style="left:598.4px;top:385.5px" width="20" height="19" viewBox="0 0 20 19"><g fill="none" stroke="#7b5ce0" stroke-width="0.95" stroke-linejoin="round"><path transform="translate(10 10.4) rotate(-45)" d="M-1 11.3L-1 -6.3L-3.4 -6.3L-3.4 -9.6L3.4 -9.6L3.4 -6.3L1 -6.3L1 11.3Z"/><path transform="translate(10 10.4) rotate(45)" d="M-1 11.3L-1 -6.3L-3.4 -6.3L-3.4 -9.6L3.4 -9.6L3.4 -6.3L1 -6.3L1 11.3Z"/></g></svg>
<svg class="ic" style="left:622.2px;top:385px" width="20" height="20" viewBox="0 0 20 20"><rect x="0.7" y="0.7" width="18.6" height="18.6" rx="1.6" fill="none" stroke="#d34fe3" stroke-width="1.4"/><path d="M1.3 18.7L18.7 1.3" stroke="#d34fe3" stroke-width="1"/></svg>
<svg class="ic" style="left:758px;top:384px" width="22" height="22" viewBox="0 0 22 22"><g fill="none" stroke="#ff2a14" stroke-width="1.1"><circle cx="11" cy="11" r="10.2"/><circle cx="11" cy="11" r="7.5"/><circle cx="11" cy="11" r="2.8"/></g><path d="M3.5 11H8.2M13.8 11H18.5" stroke="#ff2a14" stroke-width="1.5"/></svg>
<svg class="ic" style="left:920.5px;top:385.5px" width="20" height="19" viewBox="0 0 20 19"><g fill="none" stroke="#7b5ce0" stroke-width="0.95" stroke-linejoin="round"><path transform="translate(10 10.4) rotate(-45)" d="M-1 11.3L-1 -6.3L-3.4 -6.3L-3.4 -9.6L3.4 -9.6L3.4 -6.3L1 -6.3L1 11.3Z"/><path transform="translate(10 10.4) rotate(45)" d="M-1 11.3L-1 -6.3L-3.4 -6.3L-3.4 -9.6L3.4 -9.6L3.4 -6.3L1 -6.3L1 11.3Z"/></g></svg>
<svg class="ic" style="left:1082px;top:385px" width="20" height="20" viewBox="0 0 20 20"><rect x="0.7" y="0.7" width="18.6" height="18.6" rx="1.6" fill="none" stroke="#d34fe3" stroke-width="1.4"/><path d="M1.3 18.7L18.7 1.3" stroke="#d34fe3" stroke-width="1"/></svg>
<svg class="ic" style="left:1242.7px;top:388.1px" width="21" height="14" viewBox="0 0 21 14"><rect x="0" y="0" width="1.7" height="13.8" fill="#1ed41e"/><path d="M1.7 3.5H7.8V6.5M1.7 6.5H19.6V9.2H1.7" fill="none" stroke="#1ed41e" stroke-width="1.2"/><rect x="18.9" y="6" width="1.3" height="7.8" fill="#1ed41e"/></svg>
<div class="a" style="left:44.5px;top:422px;width:1272px;height:41px;background:#f2f2f2"></div>
<div class="a" style="left:44.5px;top:463px;width:1272px;height:41.5px;background:#fff"></div>
<div class="a" style="left:44.5px;top:504.5px;width:1272px;height:41.5px;background:#f2f2f2"></div>
<div class="a" style="left:44.5px;top:546px;width:1272px;height:41.799999999999955px;background:#fff"></div>
<div class="a" style="left:44.5px;top:587.8px;width:1272px;height:49.200000000000045px;background:#f2f2f2"></div>
<div class="a" style="left:44.5px;top:637px;width:1272px;height:49.200000000000045px;background:#fff"></div>
<div class="a" style="left:44.5px;top:686.2px;width:1272px;height:43.799999999999955px;background:#f2f2f2"></div>
<div class="a" style="left:44.5px;top:463px;width:1272px;height:1px;background:#dee2e6"></div>
<div class="a" style="left:44.5px;top:504.5px;width:1272px;height:1px;background:#dee2e6"></div>
<div class="a" style="left:44.5px;top:546px;width:1272px;height:1px;background:#dee2e6"></div>
<div class="a" style="left:44.5px;top:587.8px;width:1272px;height:1px;background:#dee2e6"></div>
<div class="a" style="left:44.5px;top:637px;width:1272px;height:1px;background:#dee2e6"></div>
<div class="a" style="left:44.5px;top:686.2px;width:1272px;height:1px;background:#dee2e6"></div>
<div class="td" style="left:43.03px;top:438.1px">03.02.2025</div>
<div class="td" style="left:202.09000000000003px;top:438.1px">0</div>
<div class="td" style="left:361.15px;top:438.1px">06:15:00</div>
<div class="td" style="left:520.21px;top:438.1px">10:19:00</div>
<div class="td" style="left:679.27px;top:438.1px">4:42:00</div>
<div class="td" style="left:838.33px;top:438.1px">5:37:00</div>
<div class="td" style="left:997.3900000000001px;top:438.1px">0:00:00</div>
<div class="td" style="left:1156.45px;top:438.1px">0:55:00</div>
<div class="td" style="left:43.03px;top:480.1px">05.02.2025</div>
<div class="td" style="left:202.09000000000003px;top:480.1px">0</div>
<div class="td" style="left:361.15px;top:480.1px">06:11:00</div>
<div class="td" style="left:520.21px;top:480.1px">10:01:00</div>
<div class="td" style="left:679.27px;top:480.1px">8:23:00</div>
<div class="td" style="left:838.33px;top:480.1px">1:38:00</div>
<div class="td" style="left:997.3900000000001px;top:480.1px">0:00:00</div>
<div class="td" style="left:1156.45px;top:480.1px">2:01:00</div>
<div class="td" style="left:43.03px;top:522.1px">06.02.2025</div>
<div class="td" style="left:202.09000000000003px;top:522.1px">0</div>
<div class="td" style="left:361.15px;top:522.1px">06:22:00</div>
<div class="td" style="left:520.21px;top:522.1px">9:36:00</div>
<div class="td" style="left:679.27px;top:522.1px">7:40:00</div>
<div class="td" style="left:838.33px;top:522.1px">1:56:00</div>
<div class="td" style="left:997.3900000000001px;top:522.1px">0:00:00</div>
<div class="td" style="left:1156.45px;top:522.1px">1:09:00</div>
<div class="td" style="left:43.03px;top:564.1px">07.02.2025</div>
<div class="td" style="left:202.09000000000003px;top:564.1px">0</div>
<div class="td" style="left:361.15px;top:564.1px">07:24:00</div>
<div class="td" style="left:520.21px;top:564.1px">11:20:00</div>
<div class="td" style="left:679.27px;top:564.1px">6:21:00</div>
<div class="td" style="left:838.33px;top:564.1px">4:59:00</div>
<div class="td" style="left:997.3900000000001px;top:564.1px">0:00:00</div>
<div class="td" style="left:1156.45px;top:564.1px">1:14:00</div>
<div class="th" style="left:43.03px;top:605.5px">Tiroir</div>
<div class="th" style="left:202.09000000000003px;top:605.5px">Kilométrage</div>
<div class="th" style="left:361.15px;top:605.5px">Début</div>
<div class="th" style="left:520.21px;top:605.5px">Activité</div>
<svg class="ic" style="left:748.3px;top:601px" width="22" height="22" viewBox="0 0 22 22"><g fill="none" stroke="#ff2a14" stroke-width="1.1"><circle cx="11" cy="11" r="10.2"/><circle cx="11" cy="11" r="7.5"/><circle cx="11" cy="11" r="2.8"/></g><path d="M3.5 11H8.2M13.8 11H18.5" stroke="#ff2a14" stroke-width="1.5"/></svg>
<svg class="ic" style="left:908.4px;top:602.5px" width="20" height="19" viewBox="0 0 20 19"><g fill="none" stroke="#7b5ce0" stroke-width="0.95" stroke-linejoin="round"><path transform="translate(10 10.4) rotate(-45)" d="M-1 11.3L-1 -6.3L-3.4 -6.3L-3.4 -9.6L3.4 -9.6L3.4 -6.3L1 -6.3L1 11.3Z"/><path transform="translate(10 10.4) rotate(45)" d="M-1 11.3L-1 -6.3L-3.4 -6.3L-3.4 -9.6L3.4 -9.6L3.4 -6.3L1 -6.3L1 11.3Z"/></g></svg>
<svg class="ic" style="left:1067.4px;top:602px" width="20" height="20" viewBox="0 0 20 20"><rect x="0.7" y="0.7" width="18.6" height="18.6" rx="1.6" fill="none" stroke="#d34fe3" stroke-width="1.4"/><path d="M1.3 18.7L18.7 1.3" stroke="#d34fe3" stroke-width="1"/></svg>
<svg class="ic" style="left:1226.4px;top:605.1px" width="21" height="14" viewBox="0 0 21 14"><rect x="0" y="0" width="1.7" height="13.8" fill="#1ed41e"/><path d="M1.7 3.5H7.8V6.5M1.7 6.5H19.6V9.2H1.7" fill="none" stroke="#1ed41e" stroke-width="1.2"/><rect x="18.9" y="6" width="1.3" height="7.8" fill="#1ed41e"/></svg>
<div class="td" style="left:43.03px;top:655.5px">Conducteur</div>
<div class="td" style="left:202.09000000000003px;top:655.5px">0</div>
<div class="td" style="left:361.15px;top:655.5px">16:55:00</div>
<svg class="ic" style="left:590.21px;top:652.1px" width="20" height="19" viewBox="0 0 20 19"><g fill="none" stroke="#7b5ce0" stroke-width="0.95" stroke-linejoin="round"><path transform="translate(10 10.4) rotate(-45)" d="M-1 11.3L-1 -6.3L-3.4 -6.3L-3.4 -9.6L3.4 -9.6L3.4 -6.3L1 -6.3L1 11.3Z"/><path transform="translate(10 10.4) rotate(45)" d="M-1 11.3L-1 -6.3L-3.4 -6.3L-3.4 -9.6L3.4 -9.6L3.4 -6.3L1 -6.3L1 11.3Z"/></g></svg>
<div class="td" style="left:679.27px;top:655.5px">0:00:00</div>
<div class="td" style="left:838.33px;top:655.5px">0:07:00</div>
<div class="td" style="left:997.3900000000001px;top:655.5px">0:00:00</div>
<div class="td" style="left:1156.45px;top:655.5px">0:00:00</div>
<div class="td" style="left:43.03px;top:704.9px">Conducteur</div>
<div class="td" style="left:202.09000000000003px;top:704.9px">0</div>
<div class="td" style="left:361.15px;top:704.9px">07:23:00</div>
<svg class="ic" style="left:590.11px;top:704.5px" width="21" height="14" viewBox="0 0 21 14"><rect x="0" y="0" width="1.7" height="13.8" fill="#1ed41e"/><path d="M1.7 3.5H7.8V6.5M1.7 6.5H19.6V9.2H1.7" fill="none" stroke="#1ed41e" stroke-width="1.2"/><rect x="18.9" y="6" width="1.3" height="7.8" fill="#1ed41e"/></svg>
<div class="td" style="left:679.27px;top:704.9px">0:00:00</div>
<div class="td" style="left:838.33px;top:704.9px">0:00:00</div>
<div class="td" style="left:997.3900000000001px;top:704.9px">0:00:00</div>
<div class="td" style="left:1156.45px;top:704.9px">0:01:00</div>
<div class="a" style="left:1317.2px;top:421.1px;width:16.9px;height:309px;background:#f1f1f1"></div>
<svg class="ic" style="left:1319.8px;top:423.8px" width="11" height="9" viewBox="0 0 11 9"><path d="M1.5 7L5.5 2.8L9.5 7" fill="none" stroke="#505050" stroke-width="1.9"/></svg>
<div class="a" style="left:1317.2px;top:438px;width:16.9px;height:34.8px;background:#cdcdcd"></div>
<div class="a" style="left:46px;top:330.3px;width:216px;height:35.6px;border-radius:6px;background:#b6d4f7"></div>
<div class="a" style="left:49.2px;top:333.4px;width:209.6px;height:31.5px;border-radius:4px;background:#fff;border:1px solid #86b7fe"></div>
<div class="t" style="left:62.2px;top:343px;font-size:13px;color:#3b3f44">Activité Chauffeur</div>
<svg class="ic" style="left:244px;top:346px" width="10" height="8" viewBox="0 0 10 8"><path d="M1.2 1.3L5 5.5L8.8 1.3" fill="none" stroke="#343a40" stroke-width="1.5"/></svg>
<div class="a" style="left:49px;top:364.3px;width:208.4px;height:64.2px;border-radius:4px;background:#fff;border:1px solid #a8a8a8;box-shadow:0 2px 4px rgba(0,0,0,0.15)"></div>
<div class="t" style="left:60.2px;top:376.5px;font-size:13px;color:#4a4e53">Activité Chauffeur</div>
<div class="a" style="left:54px;top:397px;width:198.7px;height:26.7px;border-radius:2px;background:#e1e0e6"></div>
<div class="t" style="left:60.2px;top:403.3px;font-size:13px;color:#222">Infractions</div>
<div class="card" style="left:45px;top:744px;width:1292px;height:200px;overflow:hidden"><div class="a" style="left:0;top:0;width:1292px;height:43px;background:#f2f2f2;border-bottom:1px solid #dcdcdc"></div><div class="a" style="left:0;top:84.2px;width:1292px;height:3.6px;background:#dee2e6"></div></div>
<div class="t" style="left:460.59999999999997px;top:758.8px;font-size:13px;line-height:13px"><b style="font-size:12.2px">Kilométrage:</b> 0</div>
<svg class="ic" style="left:579.0px;top:755.5px" width="22" height="22" viewBox="0 0 22 22"><g fill="none" stroke="#ff2a14" stroke-width="1.1"><circle cx="11" cy="11" r="10.2"/><circle cx="11" cy="11" r="7.5"/><circle cx="11" cy="11" r="2.8"/></g><path d="M3.5 11H8.2M13.8 11H18.5" stroke="#ff2a14" stroke-width="1.5"/></svg>
<svg class="ic" style="left:604.4000000000001px;top:757.0px" width="20" height="19" viewBox="0 0 20 19"><g fill="none" stroke="#7b5ce0" stroke-width="0.95" stroke-linejoin="round"><path transform="translate(10 10.4) rotate(-45)" d="M-1 11.3L-1 -6.3L-3.4 -6.3L-3.4 -9.6L3.4 -9.6L3.4 -6.3L1 -6.3L1 11.3Z"/><path transform="translate(10 10.4) rotate(45)" d="M-1 11.3L-1 -6.3L-3.4 -6.3L-3.4 -9.6L3.4 -9.6L3.4 -6.3L1 -6.3L1 11.3Z"/></g></svg>
<svg class="ic" style="left:628.3000000000001px;top:756.5px" width="20" height="20" viewBox="0 0 20 20"><rect x="0.7" y="0.7" width="18.6" height="18.6" rx="1.6" fill="none" stroke="#d34fe3" stroke-width="1.4"/><path d="M1.3 18.7L18.7 1.3" stroke="#d34fe3" stroke-width="1"/></svg>
<div class="t" style="left:650.5px;top:758.8px;font-size:12.8px;line-height:13px">180:41:00</div>
<svg class="ic" style="left:741.1px;top:755.5px" width="22" height="22" viewBox="0 0 22 22"><g fill="none" stroke="#ff2a14" stroke-width="1.1"><circle cx="11" cy="11" r="10.2"/><circle cx="11" cy="11" r="7.5"/><circle cx="11" cy="11" r="2.8"/></g><path d="M3.5 11H8.2M13.8 11H18.5" stroke="#ff2a14" stroke-width="1.5"/></svg>
<div class="t" style="left:764.4000000000001px;top:758.8px;font-size:12.8px;line-height:13px">118:23:00</div>
<svg class="ic" style="left:856.0px;top:757.0px" width="20" height="19" viewBox="0 0 20 19"><g fill="none" stroke="#7b5ce0" stroke-width="0.95" stroke-linejoin="round"><path transform="translate(10 10.4) rotate(-45)" d="M-1 11.3L-1 -6.3L-3.4 -6.3L-3.4 -9.6L3.4 -9.6L3.4 -6.3L1 -6.3L1 11.3Z"/><path transform="translate(10 10.4) rotate(45)" d="M-1 11.3L-1 -6.3L-3.4 -6.3L-3.4 -9.6L3.4 -9.6L3.4 -6.3L1 -6.3L1 11.3Z"/></g></svg>
<div class="t" style="left:879.0px;top:758.8px;font-size:12.8px;line-height:13px">62:18:00</div>
<svg class="ic" style="left:964.1px;top:756.5px" width="20" height="20" viewBox="0 0 20 20"><rect x="0.7" y="0.7" width="18.6" height="18.6" rx="1.6" fill="none" stroke="#d34fe3" stroke-width="1.4"/><path d="M1.3 18.7L18.7 1.3" stroke="#d34fe3" stroke-width="1"/></svg>
<div class="t" style="left:986.4000000000001px;top:758.8px;font-size:12.8px;line-height:13px">0:00:00</div>
<svg class="ic" style="left:1064.0px;top:759.6px" width="21" height="14" viewBox="0 0 21 14"><rect x="0" y="0" width="1.7" height="13.8" fill="#1ed41e"/><path d="M1.7 3.5H7.8V6.5M1.7 6.5H19.6V9.2H1.7" fill="none" stroke="#1ed41e" stroke-width="1.2"/><rect x="18.9" y="6" width="1.3" height="7.8" fill="#1ed41e"/></svg>
<div class="t" style="left:1086.6000000000001px;top:758.8px;font-size:12.8px;line-height:13px">20:07:00</div>
<div class="a" style="left:48px;top:747px;width:215.5px;height:37.5px;border-radius:7px;background:#b6d4f7"></div>
<div class="a" style="left:51px;top:750.3px;width:210px;height:31.5px;border-radius:4px;background:#fff;border:1px solid #86b7fe"></div>
<div class="t" style="left:64.3px;top:760px;font-size:13px;color:#3b3f44">Infractions</div>
<svg class="ic" style="left:246px;top:763px" width="10" height="8" viewBox="0 0 10 8"><path d="M1.2 1.3L5 5.5L8.8 1.3" fill="none" stroke="#343a40" stroke-width="1.5"/></svg>
<div class="th" style="left:94.6px;top:803px">Date</div>
<div class="th" style="left:352.79999999999995px;top:803px">Début</div>
<div class="th" style="left:611.0px;top:803px">Infraction</div>
<div class="th" style="left:869.1999999999999px;top:803px">Description</div>
<div class="th" style="left:1127.3999999999999px;top:803px">Gravité</div>
<div class="td" style="left:94.6px;top:850.6px">07.02.2025</div>
<div class="td" style="left:352.79999999999995px;top:850.6px">16:00:00</div>
<div class="td" style="left:611.0px;top:850.6px">Coupure</div>
<div class="td" style="left:1127.3999999999999px;top:850.6px">Mineure</div>
<div class="a" style="left:835.5px;top:848px;width:228.5px;height:13.6px;background:#0078d7"></div>
<div class="a" style="left:929.8px;top:865.3px;width:40.2px;height:13.9px;background:#0078d7"></div>
<div class="td" style="left:749.2px;width:400px;top:850.4px;font-size:10.3px;color:#fff">Le temps de conduite ininterrompu de 4h30 à été</div>
<div class="td" style="left:749.2px;width:400px;top:867.6px;font-size:10.3px;color:#fff">dépassé</div>
<div class="card" style="left:1351px;top:325px;width:445px;height:620px;overflow:hidden"><div class="a" style="left:0;top:0;width:445px;height:42px;background:#f2f2f2;border-bottom:1px solid #dcdcdc"></div></div>
<div class="t" style="left:1372px;top:339.5px;font-size:15px;color:#222">Rapport conduite/amplitude</div>
<div class="a" style="left:1494.9px;top:384px;width:1px;height:513px;background:#8a8a8a"></div>
<div class="a" style="left:1533.1px;top:384px;width:1px;height:513px;background:#d6d6d6"></div>
<div class="a" style="left:1571.9px;top:384px;width:1px;height:513px;background:#d6d6d6"></div>
<div class="a" style="left:1610.7px;top:384px;width:1px;height:513px;background:#d6d6d6"></div>
<div class="a" style="left:1649.3px;top:384px;width:1px;height:513px;background:#d6d6d6"></div>
<div class="a" style="left:1688.1px;top:384px;width:1px;height:513px;background:#d6d6d6"></div>
<div class="a" style="left:1726.9px;top:384px;width:1px;height:513px;background:#d6d6d6"></div>
<div class="a" style="left:1740.7px;top:384px;width:11px;height:513px;border-radius:6px;background:#f4f4f4"></div>
<div class="a" style="left:1740.7px;top:473px;width:11px;height:76px;border-radius:6px;background:#dadada"></div>
<div class="t" style="right:431.5px;top:430px;font-size:7.8px;color:#222">Bruno GUEF</div>
<svg class="ic" style="left:1400px;top:415.5px;filter:blur(0.8px)" width="63" height="38" viewBox="0 0 63 38"><defs><linearGradient id="bgr434" x1="0" y1="0" x2="0" y2="1"><stop offset="0" stop-color="#f8f8f8"/><stop offset="1" stop-color="#e4e4e4"/></linearGradient></defs><polygon points="0,0 32,0 63,35 63,38 0,38" fill="url(#bgr434)"/><polygon points="5,10 10,10 33,38 27,38" fill="#fafafa" opacity="0.35"/></svg>
<div class="a" style="left:1485.2px;top:424.2px;width:19.6px;height:19.6px;border-radius:50%;background:rgba(190,210,80,0.78)"></div>
<div class="t" style="right:431.5px;top:515.5px;font-size:7.8px;color:#222">Alexan</div>
<svg class="ic" style="left:1400px;top:501.0px;filter:blur(0.8px)" width="63" height="38" viewBox="0 0 63 38"><defs><linearGradient id="bgr519" x1="0" y1="0" x2="0" y2="1"><stop offset="0" stop-color="#f8f8f8"/><stop offset="1" stop-color="#e4e4e4"/></linearGradient></defs><polygon points="0,0 32,0 63,35 63,38 0,38" fill="url(#bgr519)"/><polygon points="5,10 10,10 33,38 27,38" fill="#fafafa" opacity="0.35"/></svg>
<div class="a" style="left:1495px;top:516.2px;width:197px;height:6.6px;border-radius:3.3px;background:#cadc72"></div>
<div class="a" style="left:1485.2px;top:509.7px;width:19.6px;height:19.6px;border-radius:50%;background:rgba(190,210,80,0.78)"></div>
<div class="t" style="right:431.5px;top:601px;font-size:7.8px;color:#222">Maxime</div>
<svg class="ic" style="left:1400px;top:586.5px;filter:blur(0.8px)" width="63" height="38" viewBox="0 0 63 38"><defs><linearGradient id="bgr605" x1="0" y1="0" x2="0" y2="1"><stop offset="0" stop-color="#f8f8f8"/><stop offset="1" stop-color="#e4e4e4"/></linearGradient></defs><polygon points="0,0 32,0 63,35 63,38 0,38" fill="url(#bgr605)"/><polygon points="5,10 10,10 33,38 27,38" fill="#fafafa" opacity="0.35"/></svg>
<div class="a" style="left:1495px;top:601.7px;width:197px;height:6.6px;border-radius:3.3px;background:#cadc72"></div>
<div class="a" style="left:1485.2px;top:595.2px;width:19.6px;height:19.6px;border-radius:50%;background:rgba(190,210,80,0.78)"></div>
<div class="t" style="right:431.5px;top:686.5px;font-size:7.8px;color:#222">Mall</div>
<svg class="ic" style="left:1400px;top:672.0px;filter:blur(0.8px)" width="63" height="38" viewBox="0 0 63 38"><defs><linearGradient id="bgr690" x1="0" y1="0" x2="0" y2="1"><stop offset="0" stop-color="#f8f8f8"/><stop offset="1" stop-color="#e4e4e4"/></linearGradient></defs><polygon points="0,0 32,0 63,35 63,38 0,38" fill="url(#bgr690)"/><polygon points="5,10 10,10 33,38 27,38" fill="#fafafa" opacity="0.35"/></svg>
<div class="a" style="left:1495px;top:687.2px;width:205px;height:6.6px;border-radius:3.3px;background:#cadc72"></div>
<div class="a" style="left:1485.2px;top:680.7px;width:19.6px;height:19.6px;border-radius:50%;background:rgba(190,210,80,0.78)"></div>
<div class="t" style="right:431.5px;top:772px;font-size:7.8px;color:#222">An</div>
<svg class="ic" style="left:1400px;top:757.5px;filter:blur(0.8px)" width="63" height="38" viewBox="0 0 63 38"><defs><linearGradient id="bgr776" x1="0" y1="0" x2="0" y2="1"><stop offset="0" stop-color="#f8f8f8"/><stop offset="1" stop-color="#e4e4e4"/></linearGradient></defs><polygon points="0,0 32,0 63,35 63,38 0,38" fill="url(#bgr776)"/><polygon points="5,10 10,10 33,38 27,38" fill="#fafafa" opacity="0.35"/></svg>
<div class="a" style="left:1495px;top:772.7px;width:209px;height:6.6px;border-radius:3.3px;background:#cadc72"></div>
<div class="a" style="left:1485.2px;top:766.2px;width:19.6px;height:19.6px;border-radius:50%;background:rgba(190,210,80,0.78)"></div>
<div class="t" style="right:431.5px;top:857.5px;font-size:7.8px;color:#222">Loic</div>
<svg class="ic" style="left:1400px;top:843.0px;filter:blur(0.8px)" width="63" height="38" viewBox="0 0 63 38"><defs><linearGradient id="bgr861" x1="0" y1="0" x2="0" y2="1"><stop offset="0" stop-color="#f8f8f8"/><stop offset="1" stop-color="#e4e4e4"/></linearGradient></defs><polygon points="0,0 32,0 63,35 63,38 0,38" fill="url(#bgr861)"/><polygon points="5,10 10,10 33,38 27,38" fill="#fafafa" opacity="0.35"/></svg>
<div class="a" style="left:1495px;top:858.2px;width:213px;height:6.6px;border-radius:3.3px;background:#cadc72"></div>
<div class="a" style="left:1485.2px;top:851.7px;width:19.6px;height:19.6px;border-radius:50%;background:rgba(190,210,80,0.78)"></div>
<div class="a" style="left:1495.3px;top:401.3px;width:189px;height:65px;border-radius:4px;background:rgba(197,212,70,0.97)"></div>
<div class="t" style="left:1505px;top:411px;font-size:13.8px;line-height:16.2px;color:#222">conduite/amplitude : 49%<br>conduite : 1 jours 17:03:20<br>amplitude : 3 jours 11:25:51</div>
</body></html>
